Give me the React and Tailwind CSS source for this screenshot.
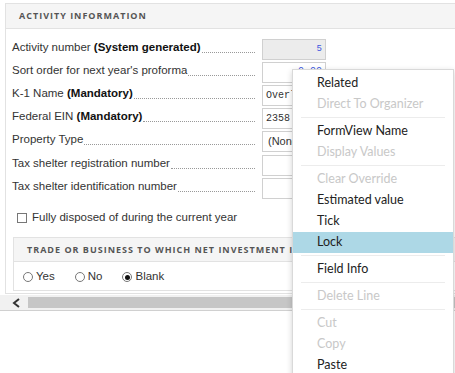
const rows1 = [
  { label: "Activity number ", bold: "(System generated)", value: "5", kind: "sys" },
  { label: "Sort order for next year's proforma", value: "0.00", kind: "num" },
  { label: "K-1 Name ", bold: "(Mandatory)", value: "Overlook", kind: "mono" },
  { label: "Federal EIN ", bold: "(Mandatory)", value: "2358", kind: "mono" },
  { label: "Property Type", value: "(None)", kind: "select" },
];

const rows2 = [
  { label: "Tax shelter registration number", value: "" },
  { label: "Tax shelter identification number", value: "" },
];

const menu = [
  { t: "Related" },
  { t: "Direct To Organizer", off: true },
  { sep: true },
  { t: "FormView Name" },
  { t: "Display Values", off: true },
  { sep: true },
  { t: "Clear Override", off: true },
  { t: "Estimated value" },
  { t: "Tick" },
  { t: "Lock", active: true },
  { sep: true },
  { t: "Field Info" },
  { sep: true },
  { t: "Delete Line", off: true },
  { sep: true },
  { t: "Cut", off: true },
  { t: "Copy", off: true },
  { t: "Paste" },
];

const Row = ({ r }) => {
  let input;
  if (r.kind === "sys") {
    input = (
      <div className="h-[21px] w-[64px] border border-[#d0d0d0] bg-[#ececec] flex items-center justify-end pr-[3px] text-[9px] text-[#3b55e0] font-['Liberation_Mono',monospace]">
        {r.value}
      </div>
    );
  } else if (r.kind === "num") {
    input = (
      <div className="h-[21px] w-[64px] border border-[#d0d0d0] bg-white flex items-start justify-end pr-[3px] pt-[1px] text-[10px] text-[#3b55e0] font-['Liberation_Mono',monospace]">
        {r.value}
      </div>
    );
  } else if (r.kind === "mono") {
    input = (
      <div className="h-[21px] w-[64px] border border-[#d0d0d0] bg-white flex items-center pl-[3px] text-[10px] text-[#333] overflow-hidden whitespace-nowrap font-['Liberation_Mono',monospace]">
        {r.value}
      </div>
    );
  } else if (r.kind === "select") {
    input = (
      <div className="h-[21px] w-[64px] border border-[#d0d0d0] bg-white flex items-center pl-[5px] text-[11px] text-[#333] overflow-hidden whitespace-nowrap">
        {r.value}
      </div>
    );
  } else {
    input = <div className="h-[21px] w-[64px] border border-[#d0d0d0] bg-white" />;
  }
  return (
    <div className="h-[23px] flex items-center">
      <div className="w-[243px] flex items-end pb-[4px] text-[11.5px] text-[#333] whitespace-nowrap">
        <span>
          {r.label}
          {r.bold && <b className="text-[#111]">{r.bold}</b>}
        </span>
        <span className="flex-1 ml-[1px] mb-[3px] border-b border-dotted border-[#999]" />
      </div>
      <div className="ml-[7px]">{input}</div>
    </div>
  );
};

const Radio = ({ label, checked }) => (
  <label className="flex items-center gap-[3px]">
    <span className="w-[10px] h-[10px] rounded-full border border-[#777] bg-white flex items-center justify-center">
      {checked && <span className="w-[5px] h-[5px] rounded-full bg-[#111]" />}
    </span>
    <span>{label}</span>
  </label>
);

export default function App() {
  return (
    <div className="relative w-[455px] h-[373px] overflow-hidden bg-white font-['Liberation_Sans',Arial,sans-serif]">
      <div className="ml-[5px] mt-[3px] w-[560px] border border-[#e2e2e2]">
        <div className="h-[25px] bg-[#f5f5f5] border-b border-[#e2e2e2] flex items-center pl-[13px] text-[9px] font-bold tracking-[1px] text-[#555] font-['Open_Sans',sans-serif]">
          ACTIVITY INFORMATION
        </div>
        <div className="pt-[9px] pl-[6px] pb-[2px]">
          {rows1.map((r) => (
            <Row key={r.label} r={r} />
          ))}
          <div className="mt-[1px]">
            {rows2.map((r) => (
              <Row key={r.label} r={r} />
            ))}
          </div>
          <div className="mt-[8px] h-[20px] flex items-center pl-[5px] gap-[5px] text-[11.5px] text-[#333]">
            <span className="w-[10px] h-[10px] border border-[#777] bg-white" />
            <span>Fully disposed of during the current year</span>
          </div>
          <div className="mt-[9px] ml-[1px] border border-[#e2e2e2]">
            <div className="h-[24px] bg-[#f5f5f5] border-b border-[#e2e2e2] flex items-center pl-[13px] text-[9px] font-bold tracking-[1px] text-[#555] whitespace-nowrap font-['Open_Sans',sans-serif]">
              TRADE OR BUSINESS TO WHICH NET INVESTMENT INCOME IS ATTRIBUTABLE
            </div>
            <div className="h-[28px] flex items-center pl-[9px] gap-[20px] pt-[2px] text-[11.5px] text-[#333]">
              <Radio label="Yes" />
              <Radio label="No" />
              <Radio label="Blank" checked />
            </div>
          </div>
        </div>
      </div>
      <div className="mt-[1px] h-[16px] bg-[#f1f1f1] border-b border-[#d0d0d0] flex items-center">
        <svg width="28" height="14" viewBox="0 0 28 14" className="shrink-0">
          <path d="M19 3 L14 7 L19 11" fill="none" stroke="#333" strokeWidth="2" />
        </svg>
        <div className="h-[11px] flex-1 bg-[#c6c6c6]" />
      </div>

      <div className="absolute left-[292px] top-[69px] w-[162px] h-[320px] bg-white border border-[#d9d9d9] shadow-[0_2px_6px_rgba(0,0,0,0.18)] pt-[3px] font-['Lato',sans-serif] text-[12.5px]">
        {menu.map((m, i) =>
          m.sep ? (
            <div key={i} className="mx-[8px] mt-[2px] mb-[3px] h-px bg-[#ececec]" />
          ) : (
            <div
              key={i}
              className={
                "h-[21px] flex items-center pl-[24px] " +
                (m.active ? "bg-[#add8e6] " : "") +
                (m.off ? "text-[#c8c8c8]" : "text-[#222]")
              }
            >
              {m.t}
            </div>
          )
        )}
      </div>
    </div>
  );
}
